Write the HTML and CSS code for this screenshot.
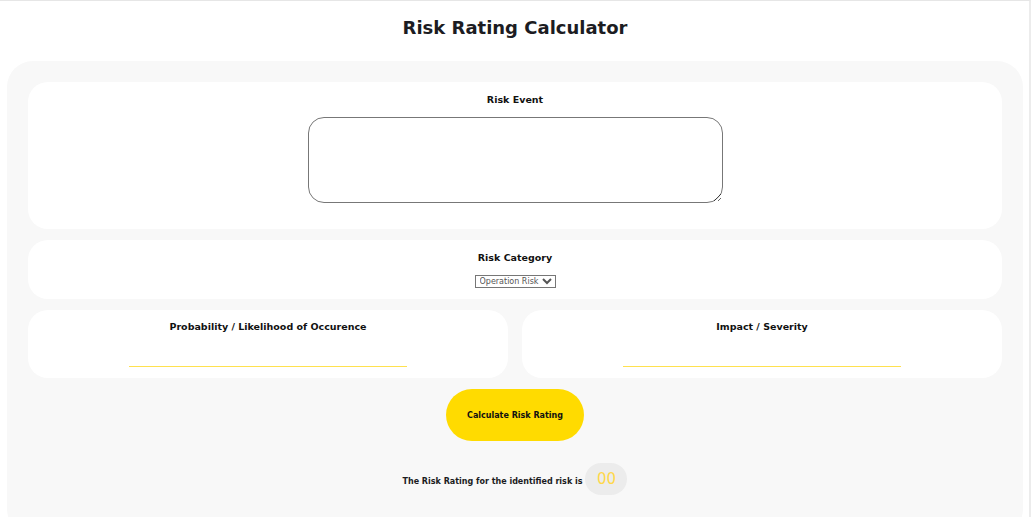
FILE: index.html
```html
<!DOCTYPE html>
<html>
<head>
<meta charset="utf-8">
<link rel="stylesheet" href="styles.css">
</head>
<body>
<div class="page">
  <h1 class="title">Risk Rating Calculator</h1>
  <div class="panel">
    <div class="card card-event">
      <label class="label">Risk Event</label>
      <textarea class="event-input"></textarea>
    </div>
    <div class="card card-category">
      <label class="label">Risk Category</label>
      <select class="category-select">
        <option>Operation Risk</option>
      </select>
    </div>
    <div class="row">
      <div class="card card-half">
        <label class="label">Probability / Likelihood of Occurence</label>
        <div class="line"></div>
      </div>
      <div class="card card-half">
        <label class="label">Impact / Severity</label>
        <div class="line"></div>
      </div>
    </div>
    <button class="calc-btn">Calculate Risk Rating</button>
    <div class="result">
      <span class="result-text">The Risk Rating for the identified risk is</span>
      <span class="result-value">00</span>
    </div>
  </div>
</div>
</body>
</html>
```
FILE: styles.css
```css
html, body {
  margin: 0;
  padding: 0;
  background: #ffffff;
  height: 100%;
  overflow: hidden;
}
body {
  font-family: "DejaVu Sans", "Liberation Sans", sans-serif;
  color: #111;
}
.page {
  border-top: 1px solid #e6e6e6;
  border-right: 2px solid #ececec;
  height: 100%;
  box-sizing: border-box;
  padding: 0 6px 0 7px;
}
.title {
  margin: 0;
  padding-top: 16px;
  height: 44px;
  text-align: center;
  font-size: 18px;
  font-weight: bold;
  letter-spacing: 0;
  color: #1c1c22;
}
.panel {
  background: #f8f8f8;
  border-radius: 26px;
  padding: 21px 21px 40px;
  display: flex;
  flex-direction: column;
  align-items: stretch;
  gap: 11px;
}
.card {
  background: #fff;
  border-radius: 20px;
  display: flex;
  flex-direction: column;
  align-items: center;
}
.label {
  font-size: 9.5px;
  font-weight: bold;
  color: #111;
}
.card-event {
  height: 147px;
  box-sizing: border-box;
  padding-top: 12px;
}
.event-input {
  margin-top: 12px;
  width: 415px;
  height: 86px;
  box-sizing: border-box;
  border: 1px solid #777;
  border-radius: 16px;
  resize: vertical;
  font-family: inherit;
}
.card-category {
  height: 59px;
  box-sizing: border-box;
  padding-top: 12px;
}
.category-select {
  margin-top: 12px;
  font-family: "DejaVu Sans", sans-serif;
  font-size: 8px;
  height: 13px;
  padding: 0;
  border: 1px solid #767676;
  border-radius: 0;
  background: #fff;
  color: #555;
}
.row {
  display: flex;
  gap: 14px;
}
.card-half {
  flex: 1;
  height: 68px;
  box-sizing: border-box;
  padding-top: 11px;
}
.line {
  margin-top: 34px;
  width: 278px;
  height: 1px;
  background: #ffe14f;
}
.calc-btn {
  align-self: center;
  width: 138px;
  height: 52px;
  border: none;
  border-radius: 26px;
  background: #ffdb00;
  font-family: inherit;
  font-size: 8px;
  font-weight: bold;
  color: #111;
  padding: 0;
}
.result {
  align-self: center;
  display: flex;
  align-items: center;
  gap: 3px;
  margin-top: 11px;
}
.result-text {
  font-size: 8px;
  font-weight: bold;
  color: #1c1c22;
  margin-top: 5px;
}
.result-value {
  background: #ececec;
  border-radius: 16px;
  width: 42px;
  height: 32px;
  display: flex;
  align-items: center;
  justify-content: center;
  color: #ffd84a;
  font-size: 15px;
}
```
